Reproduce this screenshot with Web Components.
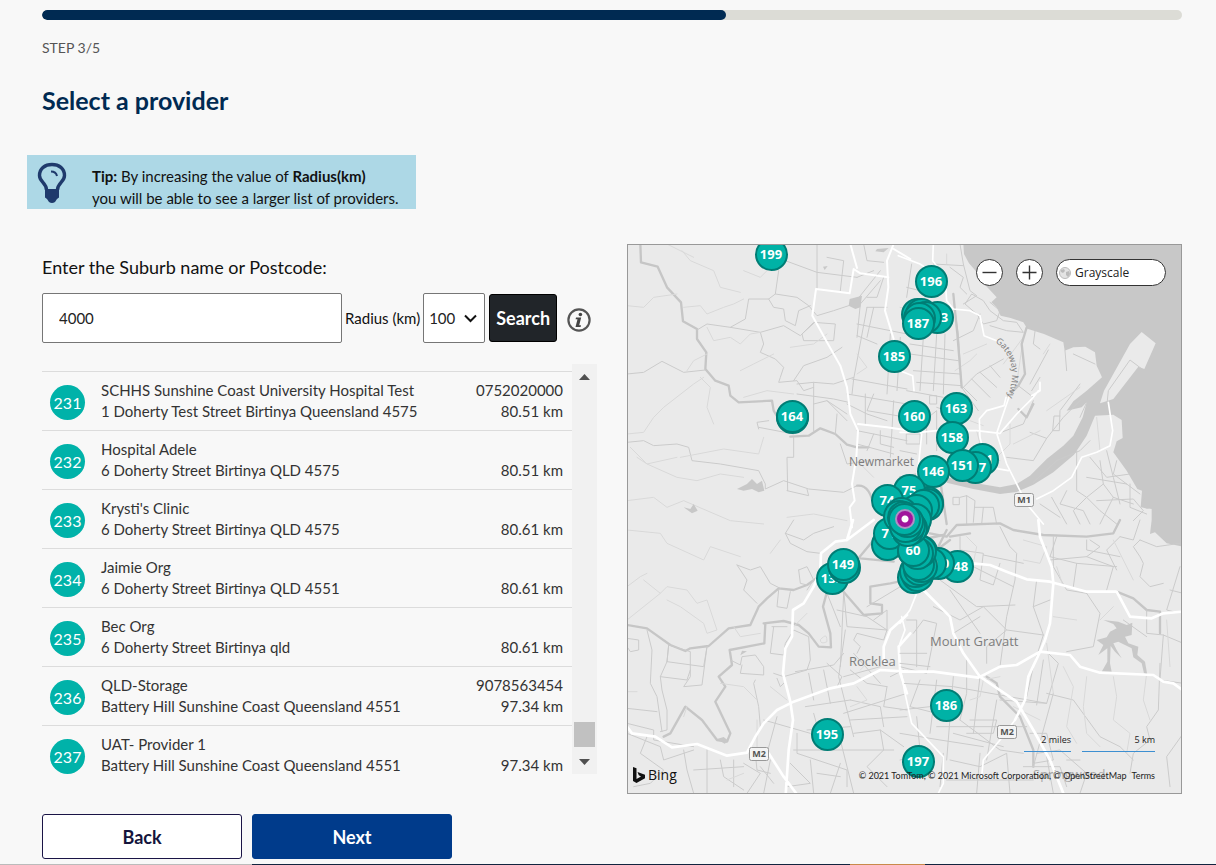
<!DOCTYPE html>
<html lang="en">
<head>
<meta charset="utf-8">
<title>Select a provider</title>
<style>
html,body{margin:0;background:#f8f8f8}
body{font-family:Lato,"Liberation Sans",sans-serif;font-size:15px;color:#111}
</style>
</head>
<body>
<provider-page></provider-page>
<script>
function define(name, html, ready) {
  const template = document.createElement('template');
  template.innerHTML = html;
  customElements.define(name, class extends HTMLElement {
    constructor() {
      super();
      this.attachShadow({mode: 'open'}).append(template.content.cloneNode(true));
    }
    connectedCallback() { if (ready) ready(this, this.shadowRoot); }
  });
}

define('step-progress', `
<style>
:host{display:block}
.track{height:10px;border-radius:5px;background:#dcdcd6;overflow:hidden}
.bar{width:60%;height:100%;border-radius:5px;background:#002a52}
p{margin:19px 0 0;font-size:14px;line-height:18px;color:#555}
</style>
<div class="track"><div class="bar"></div></div>
<p><slot></slot></p>`);

define('tip-banner', `
<style>
:host{display:flex;box-sizing:border-box;width:389px;height:54px;margin-left:-15px;padding:7px 10px;background:#add8e6;color:#111}
svg{flex:none;width:30px;height:42px;margin-right:25px}
p{margin:3px 0 0;font-size:15px;line-height:22px;white-space:nowrap}
</style>
<svg viewBox="0 0 30 42" aria-hidden="true">
<path d="M9.500 28C9.500 21 2.500 20 2.500 13.500C2.500 6.500 8 2.500 15 2.500s12.500 4 12.500 11C27.500 20 20.500 21 20.500 28" fill="none" stroke="#1f3a6c" stroke-width="3.400"/>
<path d="M14 9.500q5 0 6 4.500" fill="none" stroke="#1f3a6c" stroke-width="2"/>
<path d="M8 27h14v8.500l-2 1.500l-2 3q-3 2-6 0l-2-3l-2-1.500z" fill="#1f3a6c"/>
</svg>
<p><slot></slot></p>`);

define('provider-search', `
<style>
:host{display:block}
form{margin:0}
.prompt{display:block;font-size:18px;line-height:24px;margin-bottom:14px}
.row{display:flex;align-items:center;height:50px}
input,select{box-sizing:border-box;height:50px;border:1px solid #767676;border-radius:2px;background:#fff;font:15px Lato,sans-serif;color:#222;margin:0}
input{width:300px;padding:0 16px}
.row label{margin:0 3px;font-size:15px;white-space:nowrap}
.pick{position:relative;width:62px}
select{appearance:none;width:62px;padding:0 5px}
.pick svg{position:absolute;right:8px;top:21px;width:13px;height:9px;pointer-events:none}
button{width:68px;height:48px;margin:0 10px 0 4px;padding:0;border:1px solid #000;border-radius:3px;background:#212529;color:#fff;font:bold 18px Lato,sans-serif}
.info{width:24px;height:24px;flex:none;margin-top:4px}
</style>
<form>
<label class="prompt" for="place">Enter the Suburb name or Postcode:</label>
<div class="row">
<input id="place" type="text" value="4000">
<label for="radius">Radius (km)</label>
<div class="pick"><select id="radius"><option>100</option></select>
<svg viewBox="0 0 13 9" aria-hidden="true"><path d="M1 1.500L6.500 7L12 1.500" fill="none" stroke="#111" stroke-width="2"/></svg></div>
<button type="button">Search</button>
<svg class="info" viewBox="0 0 24 24" role="img" aria-label="Information"><circle cx="12" cy="12" r="10.600" fill="none" stroke="#555" stroke-width="2.200"/><circle cx="13.400" cy="6.500" r="1.800" fill="#444"/><path d="M9 9.600h5.200l-2 7.700h1.800l-.4 1.700H8.500L10.500 11.300H8.600z" fill="#444"/></svg>
</div>
</form>`);

define('provider-row', `
<style>
:host{display:flex;align-items:center;box-sizing:border-box;height:59px;border-top:1px solid #dcdcdc;padding:0 9px 0 8px;font-size:15px;line-height:21px;color:#333}
.num{flex:none;width:35px;height:35px;border-radius:50%;background:#00b2a9;color:#fff;font-size:16px;text-align:center;line-height:35px;margin-right:16px;margin-top:2px}
.main{flex:1;min-width:0;white-space:nowrap;padding-bottom:1px}
.side{align-self:flex-end;text-align:right;margin-bottom:8px;white-space:nowrap}
</style>
<div class="num"></div>
<div class="main"><div class="name"></div><div class="address"></div></div>
<div class="side"><div class="phone"></div><div class="distance"></div></div>`,
(el, root) => {
  for (const key of ['num', 'name', 'address', 'phone', 'distance'])
    root.querySelector('.' + key).textContent = el.getAttribute(key) || '';
});

define('provider-list', `
<style>
:host{display:flex;height:410px}
.rows{flex:1;min-width:0;overflow:hidden;padding-top:7px;box-sizing:border-box}
.bar{width:25px;background:#f1f1f1;display:flex;flex-direction:column;align-items:center;box-sizing:border-box;padding:10px 0 9px}
.bar svg{width:11px;height:6px;flex:none}
.thumb{width:21px;height:25px;background:#c1c1c1;margin-top:auto;margin-bottom:12px}
</style>
<div class="rows" role="list"></div>
<div class="bar" aria-hidden="true">
<svg viewBox="0 0 11 6"><path d="M0 6L5.500 0L11 6z" fill="#505050"/></svg>
<div class="thumb"></div>
<svg viewBox="0 0 11 6"><path d="M0 0L5.500 6L11 0z" fill="#505050"/></svg>
</div>`,
(el, root) => {
  const providers = [
    ['231', 'SCHHS Sunshine Coast University Hospital Test', '1 Doherty Test Street Birtinya Queensland 4575', '0752020000', '80.51 km'],
    ['232', 'Hospital Adele', '6 Doherty Street Birtinya QLD 4575', '', '80.51 km'],
    ['233', "Krysti's Clinic", '6 Doherty Street Birtinya QLD 4575', '', '80.61 km'],
    ['234', 'Jaimie Org', '6 Doherty Street Birtinya QLD 4551', '', '80.61 km'],
    ['235', 'Bec Org', '6 Doherty Street Birtinya qld', '', '80.61 km'],
    ['236', 'QLD-Storage', 'Battery Hill Sunshine Coast Queensland 4551', '9078563454', '97.34 km'],
    ['237', 'UAT- Provider 1', 'Battery Hill Sunshine Coast Queensland 4551', '', '97.34 km']
  ];
  for (const p of providers) {
    const row = document.createElement('provider-row');
    row.setAttribute('role', 'listitem');
    ['num', 'name', 'address', 'phone', 'distance'].forEach((k, i) => row.setAttribute(k, p[i]));
    root.querySelector('.rows').append(row);
  }
});

define('map-pin', `
<style>
:host{position:absolute;box-sizing:border-box;width:33px;height:33px;margin:-17px 0 0 -17px;border:2px solid #007d75;border-radius:50%;background:#00b2a6;color:#fff;font:bold 13px/29px "Open Sans",sans-serif;text-align:center}
</style><slot></slot>`);

define('map-base', `
<style>
:host{display:block}
svg{display:block;width:100%;height:100%}
.w{fill:#c8c8c8}.l{fill:#eaeaea}
.s,.m,.r,.f,.h{fill:none;stroke-linejoin:round;stroke-linecap:round}
.f{stroke:#d9d9d9;stroke-width:3}
.s{stroke:#cbcbcb;stroke-width:3}
.m{stroke:#c6c6c6;stroke-width:7}
.r{stroke:#fff;stroke-width:8}
.h{stroke:#fff;stroke-width:5}
text{font-family:"Open Sans","Noto Sans",sans-serif;fill:#7d7d7d}
.shield rect{fill:#f4f4f4;stroke:#999}
.shield text{font-size:9px;font-weight:bold;fill:#555;text-anchor:middle}
</style>
<svg viewBox="628 245 553 548" preserveAspectRatio="xMidYMid slice" aria-hidden="true">
<rect class="l" x="628" y="245" width="553" height="548"/>
<g transform="translate(900 244) scale(.333333)">
<path class="w" d="M190 0L192 30L207 58L228 82L245 112L276 145L290 160L274 175L290 190L302 215L332 222L370 235L382 254L432 270L490 295L494 320L520 310L556 308L585 325L590 365L606 400L560 440L520 472L500 500L545 490L560 475L548 520L520 575L490 605L440 645L390 695L350 720L300 730L230 718L140 700L140 716L220 735L300 750L350 744L400 722L460 685L522 632L560 575L585 515L640 512L665 528L668 582L650 592L640 625L680 680L712 735L726 740L722 790L755 795L755 828L750 870L765 865L800 898L860 910L860 0Z"/>
<path class="l" d="M725 264L767 298L733 375L715 368L640 465L600 478L612 440L690 300Z"/>
<path class="s" d="M722 372L690 348L625 440L622 470M270 175L300 200L290 230L250 240L230 210L195 180L215 150L250 170L270 200L310 230L350 235L370 265L320 260L270 245M405 262L400 300L420 315M445 318L390 420M495 320L500 380M585 360L520 330M355 425L400 460M420 400L395 440M540 420L480 500L478 560L458 560L462 516L480 516M390 565L440 583L490 520L540 470M560 475L540 520M440 583L400 650L320 640M400 470L370 540L290 570M160 290L220 260L240 210M190 430L230 390L310 345M215 405L270 460M240 385L290 430M270 365L300 400M230 470L190 430M160 165L175 270L185 430L235 500"/>
<path class="s" d="M35 60L20 160M100 60L190 65M150 70L190 100L180 130L200 150M180 0L190 60L210 140L230 155L190 180M20 130L60 140M30 300L160 320M70 280L60 440M110 270L100 440M135 270L130 450M30 330L175 350M40 380L180 390M50 415L185 425M20 440L130 460M90 455L110 455L110 480L90 480ZM110 490L170 510M60 540L110 500L110 620M20 570L60 570L60 600L20 600ZM0 620L50 630M80 540L80 600"/>
<path class="f" d="M165 380L210 350L230 330M190 330L260 300M430 330L450 300M310 360L370 280L350 420M440 500L540 430M230 560L250 640L300 650M590 520L600 620M340 600L420 560M210 530L250 545M330 540L330 600L290 640M140 30L140 60M0 190L40 200M150 540L190 600"/>
<path class="m" d="M160 150L172 270L185 430M380 250L365 300L375 390L355 425L325 455M0 700L60 690L120 705L140 840M355 495L380 520L400 480"/>
<path class="s" d="M200 755L225 770L220 835M160 760L178 760L178 782L160 782ZM180 760L200 755L200 840M225 790L280 790L290 840M250 790L245 840M400 715L470 650L540 620L570 590M530 620L530 740L560 760L520 800L540 840M600 650L610 720L640 760L700 780M560 700L680 720M570 640L620 700L690 690M620 620L640 700L660 780M650 650L640 690L720 750M590 770L700 765L730 800L700 830M500 740L480 780L550 800L570 840M455 760L500 840M610 720L560 760L600 800L650 840M420 780L480 820M640 760L600 840M690 720L690 790L740 810"/>
<path class="h" d="M100 0L98 50L135 100L140 170L160 195L210 200L240 215L252 275L290 290M-5 35L60 60L90 80M0 380L38 395L42 440M42 530L65 570L58 640L50 700M160 560L230 560L300 568L350 510L400 460L415 440M395 455L420 440L420 415M318 460L312 485L260 500L238 525L240 580L250 620M290 568L320 660L380 780L430 840M290 568L330 450M625 475L638 560L630 605L590 625L545 640L515 700L460 740L410 765M270 670L325 680M0 565L60 565L110 560L160 560"/>
<path d="M728 770q12-15 25 0v20q-15 10-28-5z" class="w"/>
</g>
<g transform="translate(627 244) scale(.333333)">
<path class="m" d="M40 0L42 55L92 68L120 130L162 175L168 232L210 255L210 285L238 325L235 375L265 410L305 425L310 455L335 475L435 470L440 500L455 525"/>
<path class="m" d="M490 578L545 575L580 553L625 570L660 602L690 610M725 610L690 610M690 725Q730 720 740 790"/>
<path class="s" d="M0 390L50 385L105 352L170 385L235 378M210 258L240 240L310 250L355 225L365 165L425 165L445 150L510 160L545 185L570 215L620 200L680 180L740 105L760 80M310 250L400 265L470 245L520 275L560 235L625 240L620 290L530 290L525 270L560 238M400 265L410 300L400 325L445 345L470 370L460 400L455 415L510 410L530 440L560 430L560 415L510 420M475 50L570 85L690 100M570 0L570 135M600 40L650 50L640 140M455 80L445 150M425 165L440 190L470 195L475 230L505 245L515 200L550 185M500 410L530 365L600 340L645 310M560 415L620 420L680 400M560 430L560 560M510 450L620 465L665 475M560 480L600 470L660 510M395 555L390 535L425 530M395 550L500 570M500 580L500 640L480 640L482 740M630 510L625 570M600 470L660 530"/>
<path class="s" d="M0 595L50 590L80 605L150 600L185 610L195 650L280 660L395 680L415 720L415 735L470 710L545 735L650 745L690 725M540 735L545 755L480 740M720 190L680 405L675 450M760 110L700 180L690 280M675 405L840 435M720 190L780 190M740 190L720 280M690 240L840 270M690 275L750 300M660 450L840 480M660 480L720 510L780 530M715 450L715 540M790 270L780 450M690 560L840 590M690 600L800 630M740 570L720 620M760 560L760 600L800 610M820 280L810 440M710 0L720 50L770 55M690 100L740 80M770 100L750 160L720 160M800 470L790 640M740 450L720 500L840 520M640 600L660 660L720 650"/>
<path class="f" d="M165 20L190 50L260 80L280 130L340 145M120 0L200 40M0 185L50 190L80 160L150 150M170 190L220 185L240 210L290 190L320 180L350 165M350 80L400 100L440 60M240 250L260 290L310 280L340 300L370 270L400 265M240 330L200 350L180 380M0 570L50 565L80 520L110 490L200 420L230 400M220 400L250 430L240 490L260 540M340 380L380 360L440 330M490 310L560 300L600 270M150 640L60 660L30 640M10 610L60 660L150 700L210 710L280 690L350 700M160 640L290 615L395 630L410 580M0 770L80 760L120 790L170 770L240 800L310 830L410 840M480 820L560 810L660 830M690 650L740 700M690 330L720 370L690 390M500 450L420 440L350 460"/>
<path class="w" d="M668 165L705 155L700 190L685 195L665 185ZM330 735L360 720L375 705L390 720L405 710L412 740L395 745L375 735L350 740ZM170 790L190 795L200 780L212 800L195 808ZM750 15L785 12L770 25L745 22ZM588 68L602 66L593 78Z"/>
<path class="r" style="stroke-width:6" d="M800 0L780 50L784 130L774 200L800 285M784 100L700 88L680 75L668 148L567 135L556 215L600 295L640 365L660 430L670 510L693 560L688 640L675 720L683 770L668 790L675 850M670 0L690 72M693 540L780 550L850 560M800 15L850 45"/>
</g>
<g transform="translate(627 520) scale(.333333)">
<path class="m" d="M455 205L500 210L540 195L575 170M455 205L420 235L395 260L370 315L305 325L245 378L190 385L175 393L130 375L60 325L0 315"/>
<path class="m" d="M415 310L412 370L308 390L315 435L275 470L295 500L265 545L310 640L300 665L270 660L225 600L175 560L130 640L110 650M410 310L470 303L515 315L545 340L575 380L612 382L610 340L588 260L600 215M645 210L710 285L765 280L765 255L730 250L730 200L790 190L815 185M690 120L740 60L800 40M700 115L800 125"/>
<path class="s" d="M500 0L475 40L490 70L540 95L580 100M475 40L530 60L560 40L620 20M515 150L540 140L560 180L540 210M515 150L520 190L540 195M330 135L370 150L400 140L430 190L460 205M330 135L360 180L350 210L390 250M455 210L450 260L480 265L490 215M440 320L430 400L470 405L475 370L500 330L545 350L550 420L540 450L470 470L440 460M435 320L480 320M310 420L340 435L345 410L385 405L410 440L410 465L340 460L345 435M385 480L380 490L395 560L400 620M125 375L120 425L230 440L240 380M120 425L100 470L105 510L120 570L120 630L100 635M120 425L125 375L190 395L190 470L170 500L225 495L240 380M100 470L180 480L190 450M60 330L75 390L70 490L90 530L105 635M0 355L35 360L35 390L10 395L0 380M0 565L90 575M450 475L460 500L470 490M505 455L620 435L650 400M545 460L560 540M590 450L610 550M600 430L645 470L630 500M640 440L650 220M655 330L635 470L680 650M535 560L670 540M560 580L590 690M540 630L670 620M510 640L510 700L660 750L660 800M410 600L480 620L550 640M450 590L420 700M500 690L800 690M670 540L760 560L770 620M670 600L840 590M680 640L760 630L830 680M640 660L680 820M760 630L770 690L720 740L780 800"/>
<path class="s" d="M620 215L650 210L660 320L780 330M630 270L720 290L780 330L770 360L690 340L680 360L700 380L690 400M600 220L640 320M740 300L780 270L780 330M820 200L720 260M0 610L80 630L80 660L200 680M0 640L100 680L110 720L200 690M60 650L40 700L110 750L70 790L20 800M170 690L180 750L200 820M240 690L240 820M280 720L290 770L350 810M200 750L350 740M320 720L320 800M350 730L400 760L360 820M385 700L390 750L430 760M400 740L440 790M430 720L410 820M490 730L550 790L480 800M550 720L560 820M640 730L610 820M570 760L640 770M670 450L720 490L780 500M680 400L760 490M650 470L760 440M780 500L770 560L840 570M790 470L830 450M650 580L840 520"/>
<path class="f" d="M0 30L100 40L120 70L230 120L250 80L340 110M0 200L40 170L60 160M50 180L100 220L120 200L180 210L210 250L240 240L270 330L240 340L230 310L160 260L120 240M0 300L100 220M320 320L340 350L400 340M280 490L350 500L390 540M0 515L30 515M540 280L500 320M390 600L390 700M700 450L720 430M690 500L720 540L670 560M300 780L350 760M430 100L460 60M180 560L170 590M430 500L480 540M590 350Q600 340 600 365Q580 375 580 360Z"/>
<path class="r" d="M0 620L15 640L85 650L135 682L210 672L300 707L360 698L385 650L410 610L450 570L500 545L610 505L680 490L760 450L840 455"/>
<path class="r" d="M580 150L582 100L625 65L660 60L678 0M660 60L740 0M580 150L560 200L530 250L498 270L495 350L475 385L468 460L490 545L498 600L485 690L475 840M425 700L470 770L515 830M840 285L790 330L770 380L770 430M815 380L850 340M815 380L820 460L840 520"/>
<path class="w" d="M270 657l20-6 15 12-12 8zM345 392l15 2-20 12z"/>
</g>
<g transform="translate(900 520) scale(.333333)">
<path class="m" d="M90 40L140 50L170 15L300 10L340 30L430 45L560 50L640 40L660 0M60 60L130 45M650 215L700 235L740 270L780 275L780 340M260 470L290 490L300 530L360 590L380 640L400 690L400 740M140 30L110 90L150 60M210 40L150 50"/>
<path class="s" d="M180 50L180 90L250 100L240 180L280 195L300 130M300 20L330 80L350 100L345 180L320 290L300 440M250 105L370 130M200 130L340 200M120 180L230 260L345 255M150 210L240 340M100 260L180 300L250 260L320 330L260 380L260 430M160 340L240 290M320 330L430 345M410 180L400 260L450 240M400 260L430 345L400 440M460 50L460 140L500 210L560 220M470 50L450 110L530 130L520 200M570 60L600 80L560 110L450 120M560 110L640 140L620 210M530 130L650 140M660 110L560 90L560 60M560 220L600 280L580 380L500 395M440 395L475 430L440 550L300 540M380 530L400 440M430 420L410 555M460 520L400 740"/>
<path class="s" d="M660 50L700 60L720 0M720 60L700 80L720 110L730 130L720 170L750 200L790 190M720 60L770 80L840 70M840 140L800 270L820 275M810 210L850 220M740 270L740 340L790 345L850 370M790 345L780 480L850 490M780 430L775 570L740 620L750 660L700 700L690 760M850 640L800 710L810 800M440 520L520 540L600 650L660 680L700 720M670 300L740 350M650 150L620 90L660 50"/>
<path class="s" d="M0 400L80 400M0 430L90 440M20 300L50 300L50 440M0 440L80 460L100 360L110 310L70 300L40 340M60 480L30 560L110 580M0 570L90 560M110 480L90 640M10 490L160 500L440 550M160 470L140 720M200 420L200 520L180 600M240 470L220 640M290 540L260 720M180 600L300 690L370 700M160 640L310 680M110 620L380 620M210 600L290 600L280 640L200 640M0 640L120 660L250 680M130 700L120 800M0 720L100 700M150 720L240 740L320 700L330 820M140 780L400 780M240 700L230 820M50 590L60 690M390 640L440 640L460 720L400 730M370 740L480 740L500 800M410 700L480 690L560 760L540 820M420 760L520 760M440 710L460 820M500 720L540 720"/>
<path class="f" d="M470 140L490 200M460 290L530 300M370 60L440 80L420 130L370 120M300 470L250 480L240 530L210 540M490 440L520 500L500 620L530 670M560 470L550 560L560 640L600 680M640 470L650 530L640 600L690 640L680 700M740 460L730 540L750 600M440 370L460 520M640 60L700 180M600 300L640 260M200 50L230 80L220 130M800 300L810 440M340 560L420 600"/>
<path class="w" d="M610 300L655 305L680 315L697 308L695 345L675 350L685 370L715 380L712 405L735 425L742 465L732 460L725 430L700 412L695 385L655 365L640 370L650 390L665 415L645 395L632 378L630 430L635 455L605 455L622 425L622 385L595 405L610 375L590 360L620 352L630 335L650 325L640 312Z"/>
<path class="r" d="M415 0L420 50L455 140L460 190L450 310L435 360L420 395L385 470L375 540L345 600M215 130L270 135L320 155L380 178L450 185L560 215L650 215L690 290L755 295L790 280L845 275M0 455L100 455L235 473L300 440L350 435L420 395L510 405L540 440L600 458L760 465L790 485L820 490L845 508M70 210L150 290L160 340L190 400L240 470L350 545L400 630L450 720L490 820"/>
<path class="h" d="M50 220L30 270L0 310M5 290L15 330L0 370M0 440L15 520L35 610L130 710L130 790L110 830M345 600L300 660L250 720L245 770"/>
</g>
<text x="849" y="466" font-size="12">Newmarket</text>
<text x="930" y="646" font-size="13">Mount Gravatt</text>
<text x="849" y="666" font-size="13">Rocklea</text>
<text x="1033" y="779" font-size="13" opacity=".6">Springwood</text>
<path id="gateway" d="M995 342Q1012 354 1012 374Q1012 386 1006 400" fill="none"/>
<text font-size="9"><textPath href="#gateway">Gateway Mtwy</textPath></text>
<g class="shield"><rect x="1014.500" y="493.500" width="19" height="13" rx="2"/><text x="1024" y="503">M1</text>
<rect x="997.500" y="725.500" width="19" height="13" rx="2"/><text x="1007" y="735">M2</text>
<rect x="749.500" y="747.500" width="19" height="13" rx="2"/><text x="759" y="757">M2</text></g>
</svg>`);

define('provider-map', `
<style>
:host{display:block;position:relative;box-sizing:border-box;height:550px;border:1px solid #999;overflow:hidden;font-family:"Open Sans","Noto Sans",sans-serif;color:#222}
map-base{height:548px}
.here{position:absolute;left:50%;top:274px;width:20px;height:20px;margin:-10px;border-radius:50%;box-sizing:border-box;border:2px solid #b18fc4;background:radial-gradient(#fff 3px,#a0159c 4px)}
.tools{position:absolute;top:14px;right:15px;display:flex;gap:13px}
button{box-sizing:border-box;height:27px;border:1px solid #333;border-radius:14px;background:#fff;color:#222;padding:0;margin:0}
.round{width:27px}
.round svg{display:block;width:25px;height:25px}
.style{width:110px;display:flex;align-items:center;gap:4px;padding-left:2px;font:12px "Open Sans","Noto Sans",sans-serif}
.style svg{width:12px;height:12px}
.bing{position:absolute;left:5px;bottom:8px;display:flex;align-items:center;gap:3px;font-size:14px;line-height:20px;color:#111}
.bing svg{width:12px;height:16px}
.legend{position:absolute;right:26px;bottom:41px;display:flex;gap:11px;font-size:9px;line-height:16px;text-align:right}
.legend span{border-bottom:1px solid #3d8fd1;width:47px;padding-bottom:3px}
.legend .km{width:73px}
.credit{position:absolute;right:26px;bottom:10px;font-family:Lato,sans-serif;font-size:9px;line-height:14px;white-space:nowrap;display:flex;gap:5px}
a{color:inherit;text-decoration:none}
</style>
<map-base></map-base>
<div class="pins"></div>
<div class="here"></div>
<div class="tools">
<button class="round" type="button" aria-label="Zoom out"><svg viewBox="0 0 25 25"><path d="M5.500 12.500h14" stroke="#333" stroke-width="1.400"/></svg></button>
<button class="round" type="button" aria-label="Zoom in"><svg viewBox="0 0 25 25"><path d="M5.500 12.500h14M12.500 5.500v14" stroke="#333" stroke-width="1.400"/></svg></button>
<button class="style" type="button"><svg viewBox="0 0 12 12" aria-hidden="true"><circle cx="6" cy="6" r="5.500" fill="#e4e4e4" stroke="#bbb"/><path d="M2 3l3-1 1 2-2 2-2-1zM7 5l3-1 1 3-2 3-2-2z" fill="#bbb"/></svg>Grayscale</button>
</div>
<div class="bing"><svg viewBox="0 0 12 16" aria-hidden="true"><path d="M0 0L3.500 1.300V12L8 9.400L5.800 8.300L4.500 5L12 7.700V11.300L3.500 16L0 14z" fill="#111"/></svg>Bing</div>
<div class="legend"><span>2 miles</span><span class="km">5 km</span></div>
<div class="credit"><span>© 2021 TomTom, © 2021 Microsoft Corporation, © OpenStreetMap</span><a href="#terms">Terms</a></div>`,
(el, root) => {
  const pins = [
    [771,254,'199'],[931,281,'196'],[937,317,'193'],[917,314],[921,314],[925,317],[919,318],[918,323,'187'],
    [894,356,'185'],[792,417],[792,416,'164'],[914,416,'160'],[956,408,'163'],[952,437,'158'],
    [982,459,'141'],[975,467,'157'],[962,465,'151'],[933,471,'146'],
    [927,502],[909,490,'75'],[887,500,'74'],[927,504],[923,505],[887,544],[889,533,'71'],[916,510],
    [957,566,'148'],[938,563,'150'],[921,551],[918,553],[913,550,'60'],
    [930,563,'50'],[913,577],[917,575],[915,571],[919,569],[921,566],[918,564],
    [920,551],[917,553],[913,550,'60'],
    [901,513],[899,516],[903,517],[913,525],[915,519],[911,528],[907,530],[909,525],[905,526],[907,521],[904,519],
    [832,578,'135'],[844,567],[843,564,'149'],[946,705,'186'],[827,734,'195'],[918,761,'197']
  ];
  const layer = root.querySelector('.pins');
  for (const [x, y, label] of pins) {
    const pin = document.createElement('map-pin');
    pin.style.left = `calc(50% + ${x - 904}px)`;
    pin.style.top = `${y - 244}px`;
    pin.textContent = label || '';
    layer.append(pin);
  }
});

define('step-actions', `
<style>
:host{display:flex;gap:10px}
button{box-sizing:border-box;width:200px;height:45px;border:1px solid #1a1446;border-radius:3px;background:#fff;color:#14143c;font:bold 18px Lato,sans-serif}
.next{background:#003b8b;border-color:#003b8b;color:#fff}
</style>
<button type="button">Back</button><button class="next" type="button">Next</button>`);

define('provider-page', `
<style>
:host{display:block}
main{padding:10px 34px 5px 42px}
h1{margin:25px 0 37px;font-size:25px;line-height:36px;font-weight:bold;color:#002a52}
.columns{display:grid;grid-template-columns:minmax(0,1fr) minmax(0,1fr);gap:30px;margin:35px 0 20px}
provider-search{margin:11px 0 21px}
footer{height:1px;background:linear-gradient(90deg,#bbb 252px,#12243f 252px,#12243f 850px,#c98a4a 850px,#c98a4a 925px,#12243f 925px)}
</style>
<main>
<step-progress>STEP 3/5</step-progress>
<h1>Select a provider</h1>
<tip-banner><b>Tip:</b> By increasing the value of <b>Radius(km)</b><br>you will be able to see a larger list of providers.</tip-banner>
<div class="columns">
<div><provider-search></provider-search><provider-list></provider-list></div>
<provider-map></provider-map>
</div>
<step-actions></step-actions>
</main>
<footer></footer>`);
</script>
</body>
</html>
